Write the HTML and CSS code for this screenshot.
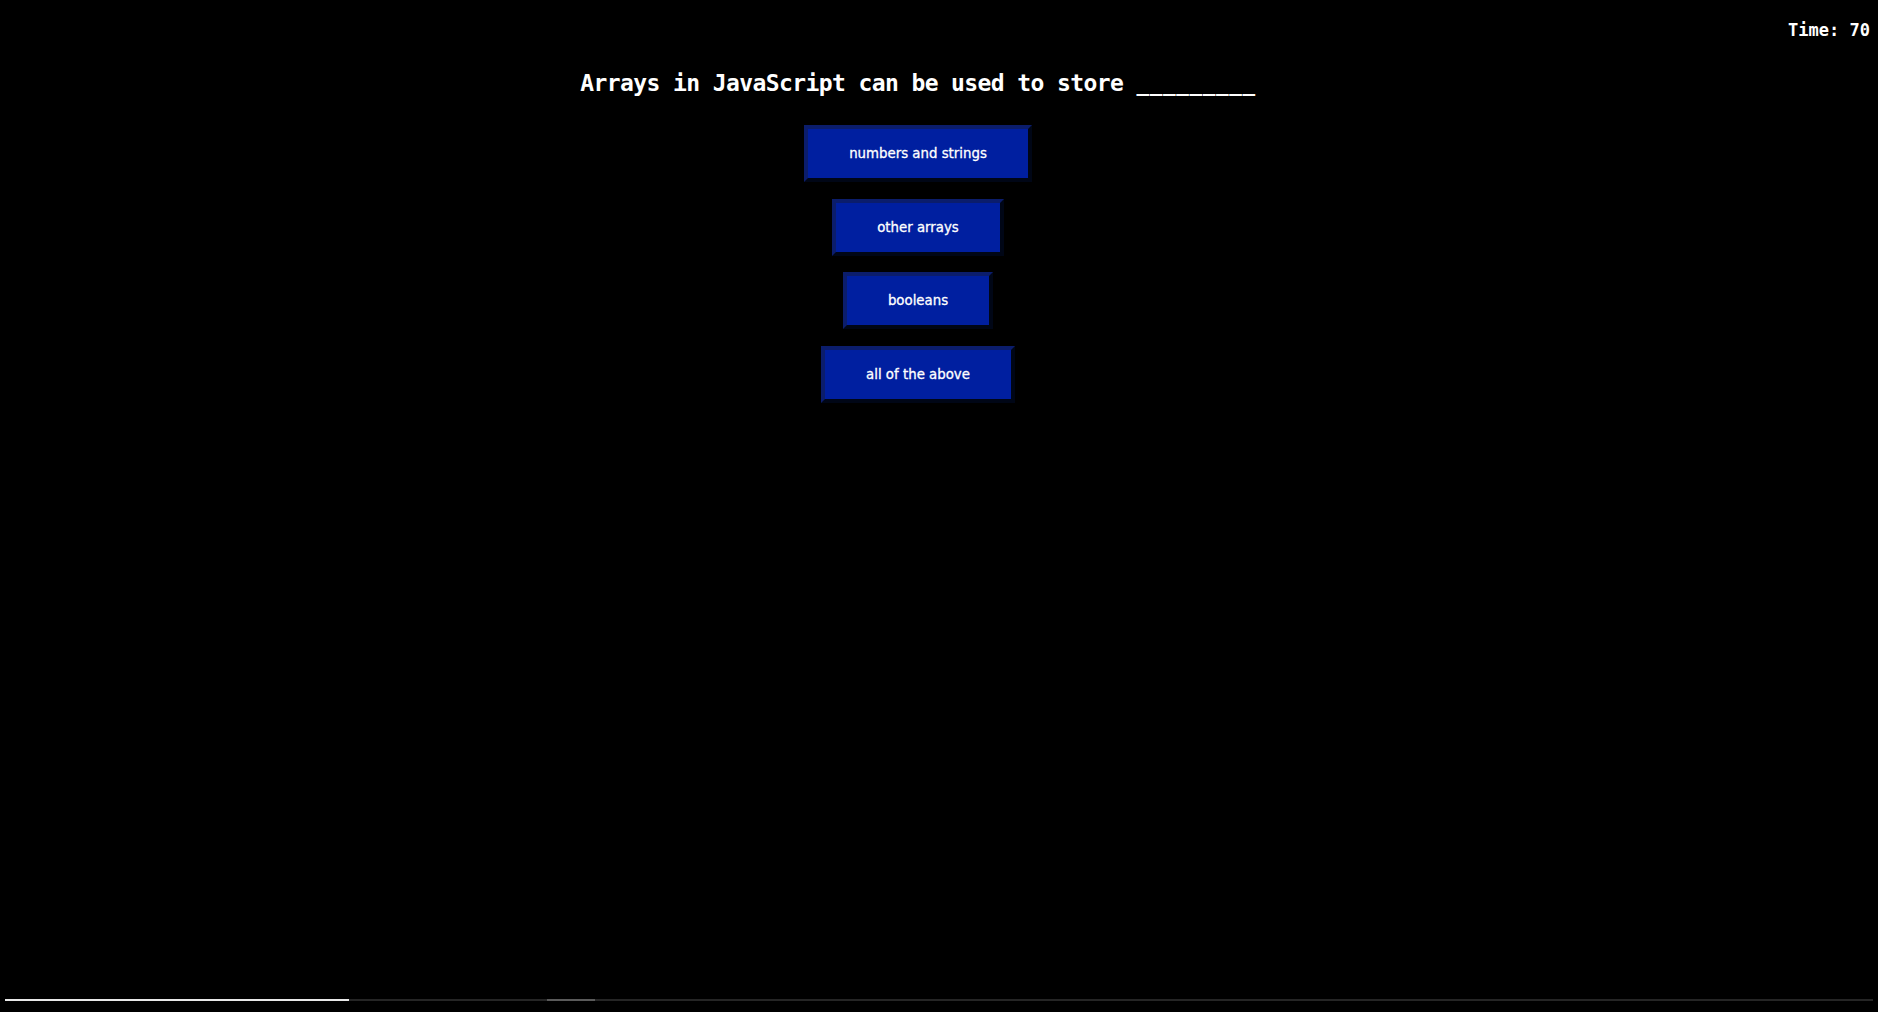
FILE: index.html
```html
<!DOCTYPE html>
<html lang="en">
<head>
<meta charset="utf-8">
<title>Quiz</title>
<link rel="stylesheet" href="styles.css">
</head>
<body>
<div class="timer-bar"><span class="timer">Time: 70</span></div>
<main class="quiz">
  <h1 class="question">Arrays in JavaScript can be used to store <span class="blank">_________</span></h1>
  <div class="choices">
    <button class="choice">numbers and strings</button>
    <button class="choice">other arrays</button>
    <button class="choice">booleans</button>
    <button class="choice">all of the above</button>
  </div>
</main>
<div class="progress">
  <div class="progress-fill" style="width: 344px"></div>
  <div class="progress-buffer" style="left: 542px; width: 48px"></div>
</div>
</body>
</html>
```

FILE: styles.css
```css
html, body {
  margin: 0;
  padding: 0;
  background: #000;
  color: #fff;
  height: 100%;
}

body {
  overflow: hidden;
}

.timer-bar {
  padding: 20px 8px 0 0;
  text-align: right;
  font-family: "DejaVu Sans Mono", "Liberation Mono", monospace;
  font-weight: bold;
  font-size: 17px;
  line-height: 20px;
}

.quiz {
  margin-right: 42px;
  display: flex;
  flex-direction: column;
  align-items: center;
}

.question {
  margin: 30px 0 0;
  font-family: "DejaVu Sans Mono", "Liberation Mono", monospace;
  font-weight: bold;
  font-size: 23px;
  line-height: 27px;
  letter-spacing: -0.6px;
  color: #fff;
}

.blank {
  letter-spacing: 0.6px;
  font-size: 21px;
}

.choices {
  margin-top: 27px;
  display: flex;
  flex-direction: column;
  align-items: center;
  gap: 16.5px;
}

.choice {
  box-sizing: border-box;
  height: 57px;
  padding: 0 41px;
  font-family: "DejaVu Sans", Verdana, sans-serif;
  font-size: 13.33px;
  line-height: 15px;
  color: #fff;
  -webkit-text-stroke: 0.3px #fff;
  background: #001fa0;
  border: 4px solid;
  border-color: #0b1d6c #000616 #000616 #0b1d6c;
  cursor: pointer;
}

.progress {
  position: fixed;
  left: 5px;
  right: 5px;
  bottom: 11px;
  height: 2px;
  background: #252525;
}

.progress-fill {
  position: absolute;
  left: 0;
  top: 0;
  height: 100%;
  background: #e8e8e8;
}

.progress-buffer {
  position: absolute;
  top: 0;
  height: 100%;
  background: #5a5a5a;
}
```
